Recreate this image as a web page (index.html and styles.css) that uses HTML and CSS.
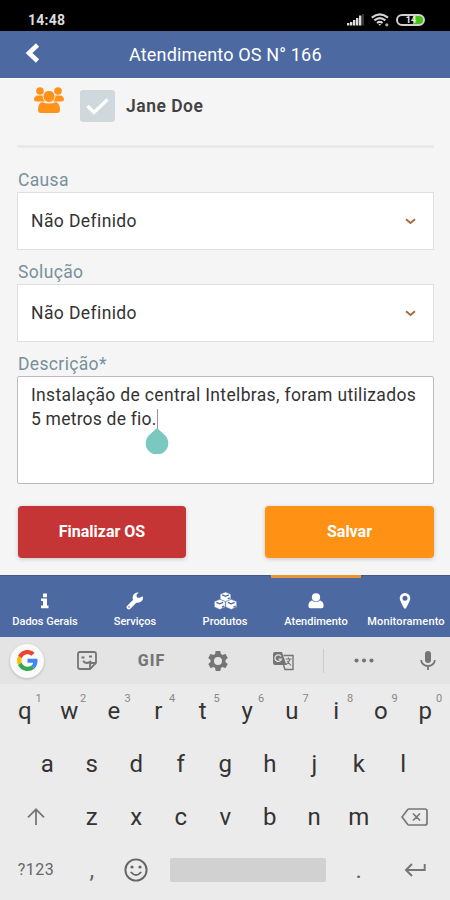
FILE: index.html
```html
<!DOCTYPE html>
<html lang="pt-BR">
<head>
<meta charset="utf-8">
<title>Atendimento OS</title>
<link rel="stylesheet" href="styles.css">
</head>
<body>
<div class="status">
  <span class="clock">14:48</span>
  <div class="status-icons">
    <svg width="17" height="12" viewBox="0 0 17 12" fill="#ddd"><path d="M0 9h2.400v2.500H0zM3 8h2.400v3.500H3zM6 6h2.400v5.500H6zM9 4h2.400v7.500H9zM12 1.500h2.400v10H12z"/><path d="M15.200 0h1.600v11.500h-1.600z" fill="#444"/></svg>
    <svg width="18" height="14" viewBox="0 0 18 14" fill="none" stroke="#d5d5d5" stroke-width="2.100"><path d="M.8 4.600Q8.800-2 17 4.600M3.400 7.400q5.500-4.500 11 0M6 10q2.800-2.200 5.600 0"/><path d="M7.300 11h3l-1.500 1.800z" fill="#d5d5d5" stroke="none"/><circle cx="15.800" cy="11.800" r="1.600" fill="#aaa" stroke="none"/></svg>
    <div class="battery">14</div>
  </div>
</div>
<header class="header">
  <svg class="back" width="15" height="20" viewBox="0 0 15 20" fill="none" stroke="#fff" stroke-width="4.600"><path d="M12.500 2 4 10l8.500 8"/></svg>
  <h1>Atendimento OS N° 166</h1>
</header>
<main class="form">
  <div class="person">
    <svg class="group" width="30" height="27" viewBox="0 0 30 27" fill="#ff931a"><circle cx="6" cy="4" r="3.800"/><circle cx="24" cy="4" r="3.800"/><path d="M3 8.500h6.500q-1 3.500 1.500 6H2.500Q0 14.500 0 12.500q0-3 3-4zM27 8.500h-6.500q1 3.500-1.500 6h8.500q2.500 0 2.500-2 0-3-3-4z"/><circle cx="15" cy="9.400" r="6" stroke="#f5f5f5" stroke-width=".8"/><path d="M8 15q7 3 14 0 4 1.500 4 8 0 3-3 3H7q-3 0-3-3 0-6.500 4-8z"/></svg>
    <div class="check"><svg width="23" height="17" viewBox="0 0 23 17" fill="none" stroke="#fff" stroke-width="3.200"><path d="m1.500 8 6.500 6.500L21.500 1.500"/></svg></div>
    <b class="person-name">Jane Doe</b>
  </div>
  <hr>
  <label class="label causa">Causa</label>
  <div class="select"><span>Não Definido</span><svg width="11" height="7" viewBox="0 0 11 7" fill="none" stroke="#a86b3c" stroke-width="1.900"><path d="M1 1.200 5.500 5 10 1.200"/></svg></div>
  <label class="label solucao">Solução</label>
  <div class="select"><span>Não Definido</span><svg width="11" height="7" viewBox="0 0 11 7" fill="none" stroke="#a86b3c" stroke-width="1.900"><path d="M1 1.200 5.500 5 10 1.200"/></svg></div>
  <label class="label descricao">Descrição*</label>
  <div class="textarea"><span class="line1">Instalação de central Intelbras, foram utilizados</span><br><span class="line2">5 metros de fio.</span><span class="caret"><svg width="24" height="26" viewBox="0 0 24 26" fill="#7ac8c0"><path d="M12 0 20 7.200A11.300 11.300 0 1 1 4 7.200z"/></svg></span></div>
  <div class="actions">
    <div class="button finish">Finalizar OS</div>
    <div class="button save">Salvar</div>
  </div>
</main>
<nav class="tabs">
  <div class="tab"><svg width="10" height="16" viewBox="0 0 10 16" fill="#fff"><path d="M3 .5h4v3.700H3zM1 5.500h6v7h1.500v2.700H1v-2.700h2V8H1z"/></svg><span>Dados Gerais</span></div>
  <div class="tab"><svg width="18" height="18" viewBox="0 0 18 18"><path d="M2.800 15.200 10 8" stroke="#fff" stroke-width="4.400" stroke-linecap="round"/><path d="M17 5.500a5.200 5.200 0 1 1-4.300-5l-2.200 2.200.4 2.700 2.900.4 2.700-1.600z" fill="#fff"/><circle cx="3" cy="15" r=".8" fill="#4d69a2"/></svg><span>Serviços</span></div>
  <div class="tab"><svg width="23" height="18" viewBox="0 0 23 18"><g fill="#fff" stroke="#4d69a2" stroke-width=".5"><path d="m11.500 0 5.300 2.200v5.300l-5.300 2.300-5.300-2.300V2.200z"/><path d="m5.800 7.300 5.500 2.300v5.300l-5.500 2.600-5.500-2.600V9.600z"/><path d="m17.200 7.300 5.500 2.300v5.300l-5.500 2.600-5.500-2.600V9.600z"/></g><path d="m8.200 2.900 3.300 1.400 3.300-1.400M2.400 10.300l3.400 1.500 3.400-1.500M13.800 10.300l3.400 1.500 3.400-1.500M13.700 6.900l2-1M8 15.200l2.300-1.100M19.400 15.200l2.300-1.100" fill="none" stroke="#4d69a2" stroke-width="1.400"/></svg><span>Produtos</span></div>
  <div class="tab active"><svg width="16" height="16" viewBox="0 0 16 16" fill="#fff"><circle cx="8" cy="4.300" r="4.100"/><path d="M4 7.500q4 3 8 0 3.600.8 3.600 5.300 0 2.500-2.300 2.500H2.700Q.4 15.300.4 12.800.4 8.300 4 7.500z"/></svg><span>Atendimento</span></div>
  <div class="tab"><svg width="12" height="17" viewBox="0 0 12 17"><path fill="#fff" fill-rule="evenodd" d="M6 .5a5.300 5.300 0 0 1 5.300 5.300Q11.300 8 6.800 16H5.200Q.7 8 .7 5.800A5.300 5.300 0 0 1 6 .5zm0 2.800a2.500 2.500 0 1 0 0 5 2.500 2.500 0 0 0 0-5z"/></svg><span class="wide">Monitoramento</span></div>
</nav>
<section class="keyboard">
  <div class="tools">
    <div class="tool google"><svg width="21" height="21" viewBox="0 0 48 48"><path fill="#EA4335" d="M24 9.500c3.540 0 6.710 1.220 9.210 3.600l6.850-6.850C35.900 2.380 30.470 0 24 0 14.620 0 6.510 5.380 2.560 13.220l7.980 6.190C12.430 13.720 17.740 9.500 24 9.500z"/><path fill="#4285F4" d="M46.980 24.550c0-1.570-.15-3.090-.38-4.550H24v9.020h12.940c-.58 2.960-2.260 5.480-4.780 7.180l7.730 6c4.510-4.180 7.090-10.360 7.090-17.650z"/><path fill="#FBBC05" d="M10.530 28.590A14.500 14.500 0 0 1 9.770 24c0-1.600.27-3.140.76-4.590l-7.980-6.190A23.900 23.900 0 0 0 0 24c0 3.880.92 7.540 2.560 10.780z"/><path fill="#34A853" d="M24 48c6.480 0 11.930-2.130 15.890-5.810l-7.730-6A14.300 14.300 0 0 1 24 38.490c-6.260 0-11.570-4.220-13.470-9.910l-7.980 6.190C6.510 42.620 14.620 48 24 48z"/></svg></div>
    <div class="tool sticker"><svg width="20" height="19" viewBox="0 0 20 19" fill="none" stroke="#757575" stroke-width="1.800"><path d="M3 1h14q2 0 2 2v9l-6 6H3q-2 0-2-2V3q0-2 2-2z"/><path d="M19 12h-4q-2 0-2 2v4M4.500 6.500h3M12 5.500h3M6 10q4 4 8 0"/></svg></div>
    <div class="tool gif">GIF</div>
    <div class="tool gear"><svg width="20" height="20" viewBox="2 2 20 20" fill="#757575"><path d="M19.430 12.980c.04-.32.07-.64.07-.98s-.03-.66-.07-.98l2.110-1.650c.19-.15.24-.42.12-.64l-2-3.460c-.12-.22-.39-.3-.61-.22l-2.490 1a7.300 7.300 0 0 0-1.690-.98l-.38-2.650A.49.49 0 0 0 14 2h-4c-.25 0-.46.180-.49.420l-.38 2.650c-.61.250-1.170.590-1.690.980l-2.490-1c-.23-.09-.49 0-.61.220l-2 3.460c-.13.220-.07.490.12.640l2.110 1.650c-.04.320-.07.650-.07.980s.03.660.07.980l-2.110 1.650c-.19.150-.24.420-.12.640l2 3.460c.12.220.39.300.61.220l2.490-1c.52.400 1.080.730 1.690.980l.38 2.650c.03.240.24.420.49.420h4c.25 0 .46-.18.49-.42l.38-2.650c.61-.25 1.170-.59 1.690-.98l2.490 1c.23.090.49 0 .61-.22l2-3.460c.12-.22.070-.49-.12-.64zM12 16a4 4 0 1 1 0-8 4 4 0 0 1 0 8z"/></svg></div>
    <div class="tool translate"><svg width="21" height="20" viewBox="0 0 21 20"><path fill="#757575" d="M2 1h7l1.300 4L13.500 14H2q-2 0-2-2V3q0-2 2-2z"/><path d="M10.500 4.500H20v14h-8L10.500 14" fill="none" stroke="#757575" stroke-width="1.400"/><path d="M8 5.300a3.300 3.300 0 1 0 .4 2.800H5.500" fill="none" stroke="#e4e4e4" stroke-width="1.300"/><path d="M12.500 8h6M15.500 6.500V8M17 8q-1 4-4 5.500M14 10l4 4.500" fill="none" stroke="#757575" stroke-width="1.100"/></svg></div>
    <i class="divider"></i>
    <div class="tool more"><svg width="20" height="5" viewBox="0 0 20 5" fill="#757575"><circle cx="2.500" cy="2.500" r="2.100"/><circle cx="10" cy="2.500" r="2.100"/><circle cx="17.500" cy="2.500" r="2.100"/></svg></div>
    <div class="tool mic"><svg width="16" height="20" viewBox="0 0 16 20"><rect x="5" y="0" width="6" height="12" rx="3" fill="#757575"/><path d="M1.200 9a6.800 6 0 0 0 13.600 0M8 15v4" fill="none" stroke="#757575" stroke-width="1.800"/></svg></div>
  </div>
  <div class="row ten">
    <span class="key">q<sup>1</sup></span><span class="key">w<sup>2</sup></span><span class="key">e<sup>3</sup></span><span class="key">r<sup>4</sup></span><span class="key">t<sup>5</sup></span><span class="key">y<sup>6</sup></span><span class="key">u<sup>7</sup></span><span class="key">i<sup>8</sup></span><span class="key">o<sup>9</sup></span><span class="key">p<sup>0</sup></span>
  </div>
  <div class="row nine">
    <span class="key">a</span><span class="key">s</span><span class="key">d</span><span class="key">f</span><span class="key">g</span><span class="key">h</span><span class="key">j</span><span class="key">k</span><span class="key">l</span>
  </div>
  <div class="row letters">
    <span class="key"><svg width="18" height="17" viewBox="0 0 18 17" fill="none" stroke="#777" stroke-width="1.800"><path d="M9 17V1.500M1 9.300l8-8 8 8"/></svg></span><span class="key">z</span><span class="key">x</span><span class="key">c</span><span class="key">v</span><span class="key">b</span><span class="key">n</span><span class="key">m</span><span class="key"><svg width="27" height="18" viewBox="0 0 27 18" fill="none" stroke="#777" stroke-width="1.700"><path d="M8 1h16q2 0 2 2v12q0 2-2 2H8q-1 0-1.600-.9L1 9l5.400-7.100Q7 1 8 1zM12 5.500l7 7m0-7-7 7"/></svg></span>
  </div>
  <div class="row bottom">
    <span class="key symbols">?123</span><span class="key comma">,</span>
    <span class="key"><svg width="24" height="24" viewBox="0 0 24 24" fill="none" stroke="#666" stroke-width="1.900"><circle cx="12" cy="12" r="10.600"/><path d="M6.800 14q5.200 6 10.400 0"/><circle cx="8" cy="9" r="1.600" fill="#666" stroke="none"/><circle cx="16" cy="9" r="1.600" fill="#666" stroke="none"/></svg></span>
    <span class="space"></span><span class="key dot">.</span>
    <span class="key"><svg width="22" height="14" viewBox="0 0 22 14" fill="none" stroke="#777" stroke-width="2"><path d="M20.700 1v6H2M8 1 2 7l6 6"/></svg></span>
  </div>
</section>
</body>
</html>
```
FILE: styles.css
```css
* { box-sizing: border-box; }
body { margin: 0; width: 450px; height: 900px; overflow: hidden; background: #f5f5f5; font-family: Roboto, sans-serif; }
svg { display: block; flex: none; }
.status { height: 31px; background: #000; display: flex; justify-content: space-between; align-items: center; padding: 9px 25px 0 28px; color: #ddd; }
.clock { font-size: 14px; font-weight: 700; letter-spacing: .25px; line-height: 22px; }
.status-icons { display: flex; align-items: center; gap: 7px; padding-bottom: 1px; }
.battery { width: 29px; height: 12px; border: 2px solid #d0d0d0; border-radius: 6px; color: #eee; font-size: 9px; font-weight: 700; line-height: 8px; text-align: center; padding-left: 1px; background: linear-gradient(90deg, #000 60%, #46c21b 60%); }
.header { height: 48px; background: #4d69a2; border-bottom: 1px solid #fff; display: flex; align-items: center; padding-left: 25px; color: #fff; }
.back { margin-top: -4px; }
h1 { margin: 0 0 0 89px; font-size: 18px; font-weight: 400; letter-spacing: .17px; white-space: nowrap; }
.form { height: 496px; padding: 0 16px 0 17px; color: #333; }
.person { height: 66px; display: flex; align-items: flex-start; padding: 8px 0 0 17px; }
.check { width: 35px; height: 32px; margin: 3px 0 0 16px; background: #cfd8dc; border-radius: 3px; display: flex; align-items: center; justify-content: center; }
.person-name { margin: 8px 0 0 11px; font-size: 17.500px; line-height: 22px; font-weight: 600; letter-spacing: .5px; color: #424242; }
hr { margin: 0; border: 0; height: 3px; background: #e9e9e9; }
.label { display: block; color: #78909c; font-size: 17.500px; letter-spacing: .35px; line-height: 22px; height: 22px; padding-left: 1px; white-space: nowrap; }
.causa { margin-top: 21px; margin-bottom: 1px; }
.solucao, .descricao { margin-top: 11px; margin-bottom: 1px; }
.select { height: 58px; border: 1px solid #dde1e2; background: #fff; padding: 0 17px 0 13px; display: flex; align-items: center; justify-content: space-between; font-size: 17.500px; letter-spacing: .4px; }
.textarea { height: 108px; background: #fff; border: 1px solid #bbb; border-radius: 2px; padding: 6px 0 0 13px; font-size: 17.500px; line-height: 24px; white-space: nowrap; letter-spacing: .35px; }
.line2 { letter-spacing: .22px; }
.caret { display: inline-block; position: relative; width: 1px; height: 20px; background: #999; vertical-align: -4px; }
.caret svg { position: absolute; left: -12px; top: 19px; }
.actions { display: flex; justify-content: space-between; padding-left: 1px; margin-top: 22px; }
.button { width: 168px; height: 52px; border-radius: 4px; color: #fff; font-size: 16px; font-weight: 700; line-height: 52px; text-align: center; box-shadow: 0 1px 4px #0003; }
.finish { background: #c63535; }
.save { width: 169px; background: #ff9214; }
.tabs { height: 62px; display: flex; background: #4d69a2; color: #fff; }
.tab { width: 90px; padding-top: 16px; display: flex; flex-direction: column; align-items: center; font-size: 11px; border-top: 1px solid #40598b; }
.tab svg { height: 18px; }
.tab span { margin-top: 5px; line-height: 14px; white-space: nowrap; font-weight: 500; }
.tab .wide { letter-spacing: .15px; margin-left: 2px; }
.active { position: relative; left: 1px; border-top: 3px solid #e99536; padding-top: 14px; }
.keyboard { height: 263px; background: #ebebeb; }
.tools { height: 47px; background: #e4e4e4; display: grid; grid-template-columns: 54px 65px 65px 67px 64px 17px 64px 54px; align-items: center; justify-items: center; }
.google { width: 34px; height: 34px; border-radius: 50%; background: #fafafa; box-shadow: 0 1px 3px #0003; display: flex; align-items: center; justify-content: center; }
.gif { color: #757575; font-weight: 800; font-size: 16px; letter-spacing: 1px; }
.mic { margin-left: 10px; }
.divider { width: 1px; height: 24px; background: #ccc; }
.row { height: 53px; display: flex; padding-left: 2.500px; }
.key { position: relative; width: 44.500px; display: flex; align-items: center; justify-content: center; font-size: 24px; color: #333; }
.key sup { position: absolute; left: 33px; top: 8px; font-size: 11px; line-height: 13px; color: #888; }
.nine { padding-left: 25px; }
.letters .key:first-child, .symbols { width: 67px; }
.letters .key:last-child, .bottom .key:last-child { width: 67px; }
.key.symbols { font-size: 16px; letter-spacing: .5px; color: #666; }
.comma, .dot { color: #666; }
.space { width: 156px; height: 24px; margin: 15px 11px 0; background: #d1d1d1; border-radius: 2px; }
```
